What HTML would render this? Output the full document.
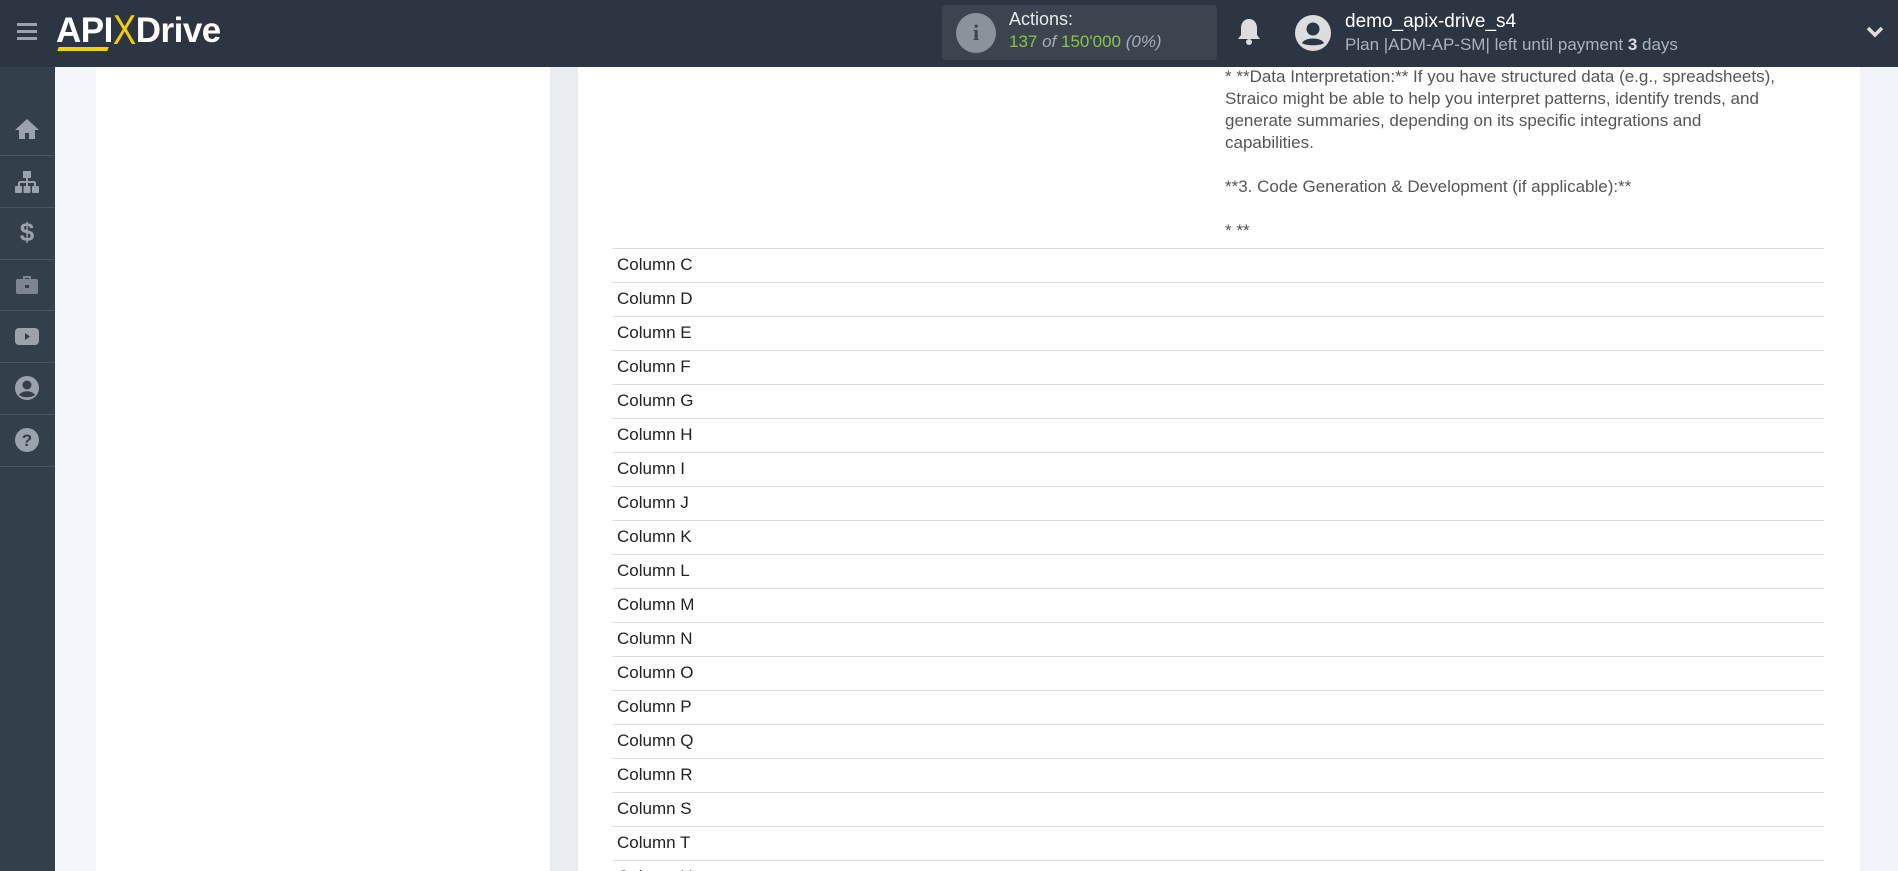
<!DOCTYPE html>
<html style="overflow:hidden;width:1898px;height:871px"><head><meta charset="utf-8"><style>
*{margin:0;padding:0;box-sizing:border-box}
body{width:1898px;height:871px;overflow:hidden;background:#eef1f6;font-family:"Liberation Sans",sans-serif;position:relative}
.hdr{position:absolute;left:0;top:0;width:1898px;height:67px;background:#2c3643}
.side{position:absolute;left:0;top:67px;width:55px;height:804px;background:#343f4c}
.sep{position:absolute;left:0;width:55px;height:1px;background:#4a5562}
.ic{position:absolute;left:13px;width:28px;height:28px}
.lp{position:absolute;left:55px;top:67px;width:41px;height:804px;background:#f3f6fb}
.p1{position:absolute;left:96px;top:67px;width:454px;height:804px;background:#fff}
.gap{position:absolute;left:550px;top:67px;width:28px;height:804px;background:#eaeef3}
.p2{position:absolute;left:578px;top:67px;width:1282px;height:804px;background:#fff}
.rp{position:absolute;left:1860px;top:67px;width:38px;height:804px;background:#f1f4f8}
.txt{position:absolute;left:1225px;top:66px;width:562px;font-size:17px;line-height:22px;color:#555}
.row{position:absolute;left:612px;width:1212px;height:34px;border-top:1px solid #dedede;font-size:17px;color:#222;padding-left:5px;line-height:32px;overflow:hidden}
</style></head><body>
<div class="lp"></div><div class="p1"></div><div class="gap"></div><div class="p2"></div><div class="rp"></div>
<div class="txt">* **Data Interpretation:** If you have structured data (e.g., spreadsheets), Straico might be able to help you interpret patterns, identify trends, and generate summaries, depending on its specific integrations and capabilities.<br><br>**3. Code Generation &amp; Development (if applicable):**<br><br>* **</div>
<div class="row" style="top:248px">Column C</div>
<div class="row" style="top:282px">Column D</div>
<div class="row" style="top:316px">Column E</div>
<div class="row" style="top:350px">Column F</div>
<div class="row" style="top:384px">Column G</div>
<div class="row" style="top:418px">Column H</div>
<div class="row" style="top:452px">Column I</div>
<div class="row" style="top:486px">Column J</div>
<div class="row" style="top:520px">Column K</div>
<div class="row" style="top:554px">Column L</div>
<div class="row" style="top:588px">Column M</div>
<div class="row" style="top:622px">Column N</div>
<div class="row" style="top:656px">Column O</div>
<div class="row" style="top:690px">Column P</div>
<div class="row" style="top:724px">Column Q</div>
<div class="row" style="top:758px">Column R</div>
<div class="row" style="top:792px">Column S</div>
<div class="row" style="top:826px">Column T</div>
<div class="row" style="top:860px;height:11px">Column U</div>

<div class="hdr">
 <div style="position:absolute;left:17px;top:23px;width:20px;height:3px;background:#9aa3ad;box-shadow:0 7px 0 #9aa3ad,0 14px 0 #9aa3ad"></div>
 <div style="position:absolute;left:56px;top:10px;font-size:35px;font-weight:bold;color:#fff;letter-spacing:-0.5px;line-height:42px">API<span style="color:#f5d000;font-weight:normal;display:inline-block;transform:scaleY(1.2)">X</span>Drive</div>
 <div style="position:absolute;left:58px;top:47px;width:50px;height:4px;background:#f5d000;transform:skewX(-20deg)"></div>
 <div style="position:absolute;left:942px;top:5px;width:275px;height:55px;background:#3a4550;border-radius:4px"></div>
 <div style="position:absolute;left:956px;top:13px;width:40px;height:40px;border-radius:50%;background:#8a939c;color:#3a4550;font:bold 22px 'Liberation Serif',serif;text-align:center;line-height:40px">i</div>
 <div style="position:absolute;left:1009px;top:9px;font-size:18px;color:#e8e8e8">Actions:</div>
 <div style="position:absolute;left:1009px;top:32px;font-size:17px;color:#8bc34a">137 <i style="color:#aab">of</i> 150'000 <i style="color:#aab">(0%)</i></div>
 <svg style="position:absolute;left:1236px;top:17px" width="26" height="30" viewBox="0 0 26 30"><path d="M13 2c-5 0-8 4-8 9v7l-3 4h22l-3-4v-7c0-5-3-9-8-9z" fill="#ddd"/><circle cx="13" cy="25" r="3" fill="#ddd"/></svg>
 <svg style="position:absolute;left:1295px;top:15px" width="36" height="36" viewBox="0 0 36 36"><circle cx="18" cy="18" r="18" fill="#ddd"/><circle cx="18" cy="14" r="6.5" fill="#2c3643"/><path d="M7 28c3-6 19-6 22 0c-3 3-19 3-22 0z" fill="#2c3643"/></svg>
 <div style="position:absolute;left:1345px;top:11px;font-size:19px;color:#fff">demo_apix-drive_s4</div>
 <div style="position:absolute;left:1345px;top:35px;font-size:17px;color:#aab2bb">Plan |ADM-AP-SM| left until payment <b style="color:#ddd">3</b> days</div>
 <svg style="position:absolute;left:1866px;top:25px" width="18" height="14" viewBox="0 0 18 14"><path d="M2 3l7 7 7-7" stroke="#ddd" stroke-width="3.5" fill="none"/></svg>
</div>

<div class="side">
 <div class="sep" style="top:88px"></div><div class="sep" style="top:140px"></div><div class="sep" style="top:192px"></div><div class="sep" style="top:243px"></div><div class="sep" style="top:295px"></div><div class="sep" style="top:347px"></div><div class="sep" style="top:399px"></div>
 <svg class="ic" style="top:48px" viewBox="0 0 28 28"><path d="M14 4L2 15h4v9h6v-6h4v6h6v-9h4z" fill="#9aa2ab"/></svg>
 <svg class="ic" style="top:101px" viewBox="0 0 28 28"><rect x="10" y="3" width="8" height="7" fill="#9aa2ab"/><path d="M14 10v4M6 14h16M6 14v4M14 14v4M22 14v4" stroke="#9aa2ab" stroke-width="2"/><rect x="2" y="18" width="7" height="7" rx="1" fill="#9aa2ab"/><rect x="10.5" y="18" width="7" height="7" rx="1" fill="#9aa2ab"/><rect x="19" y="18" width="7" height="7" rx="1" fill="#9aa2ab"/></svg>
 <div class="ic" style="top:151px;color:#9aa2ab;font-weight:bold;font-size:26px;text-align:center;line-height:28px">$</div>
 <svg class="ic" style="top:203px" viewBox="0 0 28 28"><path d="M10 6h8v3h-2V8h-4v1h-2z" fill="#7d8690"/><rect x="3" y="9" width="22" height="15" rx="2" fill="#7d8690"/><rect x="12" y="15" width="4" height="3" fill="#343f4c"/></svg>
 <svg class="ic" style="top:255px" viewBox="0 0 28 28"><rect x="2" y="6" width="24" height="17" rx="4" fill="#9aa2ab"/><path d="M12 11v7l5-3.5z" fill="#343f4c"/></svg>
 <svg class="ic" style="top:307px" viewBox="0 0 28 28"><circle cx="14" cy="14" r="12" fill="#9aa2ab"/><circle cx="14" cy="11" r="4.5" fill="#343f4c"/><path d="M6 21c3-5 13-5 16 0c-4 3-12 3-16 0z" fill="#343f4c"/></svg>
 <svg class="ic" style="top:359px" viewBox="0 0 28 28"><circle cx="14" cy="14" r="12" fill="#9aa2ab"/><text x="14" y="20" font-size="17" font-weight="bold" text-anchor="middle" fill="#343f4c" font-family="Liberation Sans">?</text></svg>
</div>
</body></html>
